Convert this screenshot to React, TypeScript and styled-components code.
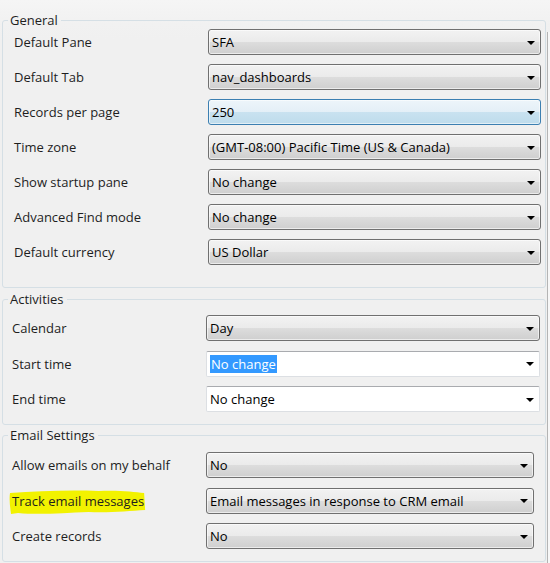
import React from "react";
import styled, { createGlobalStyle, css } from "styled-components";

const Global = createGlobalStyle`
  html, body { margin: 0; padding: 0; }
  body {
    background: #f0f0f0;
    font-family: "Open Sans", "Noto Sans", Arial, sans-serif;
    font-size: 13px;
    color: #1e1e1e;
    overflow: hidden;
  }
`;

const Page = styled.div`
  width: 550px;
  height: 563px;
  display: flex;
  background: linear-gradient(#f5f5f5 0, #f1f1f1 24px, #f0f0f0 40px);
  overflow: hidden;
`;

const Panels = styled.div`
  flex: 0 0 544px;
  margin-left: 2px;
  display: flex;
  flex-direction: column;
`;

const ScrollEdge = styled.div`
  flex: 0 0 2px;
  margin-left: 1px;
  margin-top: 32px;
  border-left: 1px solid #b4b4b4;
  background: #f7f7f7;
`;

const Group = styled.fieldset<{ $mt: number; $pt: number; $pb: number; $pl: number; $pr: number; $gap: number }>`
  margin: ${(p) => p.$mt}px 0 0 0;
  padding: ${(p) => p.$pt}px ${(p) => p.$pr}px ${(p) => p.$pb}px ${(p) => p.$pl}px;
  border: 1px solid #d5dfe5;
  border-radius: 3px;
  min-width: 0;
  display: grid;
  grid-template-columns: 194px 1fr;
  row-gap: ${(p) => p.$gap}px;
  align-items: center;
`;

const Legend = styled.legend<{ $shift: number }>`
  margin-left: ${(p) => p.$shift}px;
  padding: 0 3px 0 2px;
  font-size: 13px;
  line-height: 16px;
  color: #1e1e1e;
`;

const Label = styled.div`
  font-size: 13px;
  line-height: 16px;
  color: #1e1e1e;
  white-space: nowrap;
`;

const Highlight = styled.span`
  position: relative;
  display: inline-block;
  z-index: 0;
`;

const Marker = styled.svg`
  position: absolute;
  left: -4px;
  right: -2px;
  top: -4px;
  bottom: -6px;
  width: calc(100% + 6px);
  height: calc(100% + 10px);
  z-index: -1;
`;

const Select = styled.div<{ $variant?: "normal" | "focus" | "edit" }>`
  height: 26px;
  box-sizing: border-box;
  display: flex;
  align-items: center;
  padding: 0 5px 0 3px;
  border-radius: 3px;
  font-size: 13px;
  color: #000;
  white-space: nowrap;
  ${(p) =>
    p.$variant === "focus"
      ? css`
          border: 1px solid #3c7fb1;
          background: linear-gradient(#edf5fa 0%, #e4eff7 48%, #c9e2f0 50%, #bedcec 100%);
          box-shadow: inset 0 0 0 1px rgba(255, 255, 255, 0.55);
        `
      : p.$variant === "edit"
      ? css`
          border: 1px solid #dcdfe3;
          border-top-color: #a9abaf;
          border-radius: 2px;
          background: #ffffff;
        `
      : css`
          border: 1px solid #707070;
          background: linear-gradient(#f2f2f2 0%, #ebebeb 48%, #dddddd 50%, #cfcfcf 100%);
          box-shadow: inset 0 0 0 1px rgba(255, 255, 255, 0.6);
        `}
`;

const Value = styled.span`
  flex: 1;
  overflow: hidden;
`;

const Selected = styled.span`
  background: #3399ff;
  color: #ffffff;
  padding: 1px 1px 2px 1px;
`;

const Arrow = styled.span`
  width: 0;
  height: 0;
  border-left: 4px solid transparent;
  border-right: 4px solid transparent;
  border-top: 4px solid #000;
  margin-top: 1px;
`;

type Opt = { label: React.ReactNode; value: React.ReactNode; variant?: "normal" | "focus" | "edit" };

const Field = ({ label, value, variant }: Opt) => (
  <>
    <Label>{label}</Label>
    <Select $variant={variant}>
      <Value>{value}</Value>
      <Arrow />
    </Select>
  </>
);

export default function App() {
  return (
    <>
      <Global />
      <Page>
        <Panels>
          <Group $mt={12} $pt={1} $pb={22} $pl={11} $pr={4} $gap={9}>
            <Legend $shift={-6}>General</Legend>
            <Field label="Default Pane" value="SFA" />
            <Field label="Default Tab" value="nav_dashboards" />
            <Field label="Records per page" value="250" variant="focus" />
            <Field label="Time zone" value="(GMT-08:00) Pacific Time (US & Canada)" />
            <Field label="Show startup pane" value="No change" />
            <Field label="Advanced Find mode" value="No change" />
            <Field label="Default currency" value="US Dollar" />
          </Group>
          <Group $mt={3} $pt={8} $pb={12} $pl={9} $pr={5} $gap={9.5}>
            <Legend $shift={-4}>Activities</Legend>
            <Field label="Calendar" value="Day" />
            <Field label="Start time" value={<Selected>No change</Selected>} variant="edit" />
            <Field label="End time" value="No change" variant="edit" />
          </Group>
          <Group $mt={2} $pt={9} $pb={12} $pl={9} $pr={11} $gap={9.5}>
            <Legend $shift={-4}>Email Settings</Legend>
            <Field label="Allow emails on my behalf" value="No" />
            <Field
              label={
                <Highlight>
                  <Marker viewBox="0 0 137 26" preserveAspectRatio="none">
                    <path
                      d="M2 4 C30 2 60 1 90 2 C110 1 125 3 135 4 L136 21 C120 22 100 24 80 23 C55 24 30 26 10 24 L3 25 C2 18 1 10 2 4 Z"
                      fill="#f2f200"
                    />
                  </Marker>
                  Track email messages
                </Highlight>
              }
              value="Email messages in response to CRM email"
            />
            <Field label="Create records" value="No" />
          </Group>
        </Panels>
        <ScrollEdge />
      </Page>
    </>
  );
}
